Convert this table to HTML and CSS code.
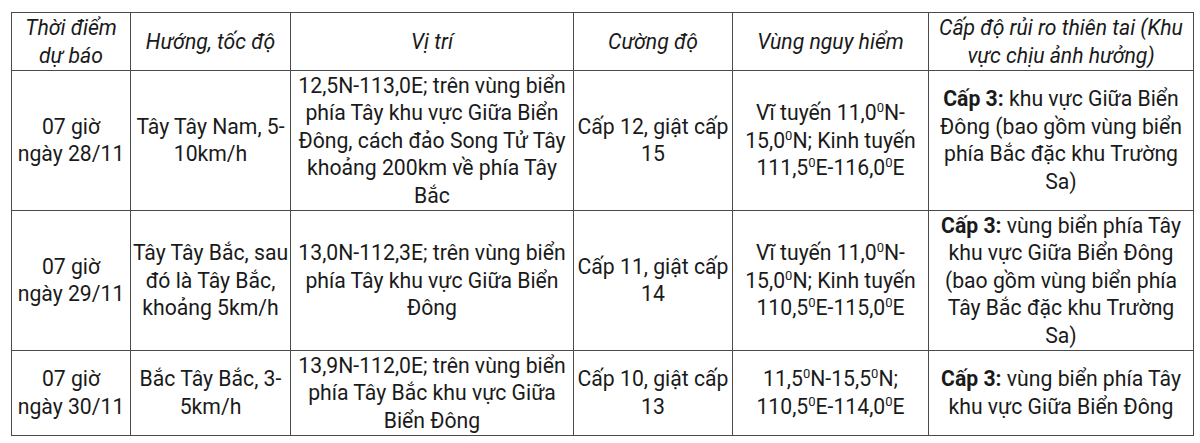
FILE: index.html
```html
<!DOCTYPE html>
<html lang="vi">
<head>
<meta charset="utf-8">
<link rel="stylesheet" href="styles.css">
</head>
<body>
<table class="forecast">
  <colgroup>
    <col class="c1"><col class="c2"><col class="c3"><col class="c4"><col class="c5"><col class="c6">
  </colgroup>
  <thead>
    <tr>
      <th>Thời điểm dự báo</th>
      <th>Hướng, tốc độ</th>
      <th>Vị trí</th>
      <th>Cường độ</th>
      <th>Vùng nguy hiểm</th>
      <th>Cấp độ rủi ro thiên tai (Khu vực chịu ảnh hưởng)</th>
    </tr>
  </thead>
  <tbody>
    <tr>
      <td>07 giờ<br>ngày 28/11</td>
      <td>Tây Tây Nam, 5-10km/h</td>
      <td>12,5N-113,0E; trên vùng biển phía Tây khu vực Giữa Biển Đông, cách đảo Song Tử Tây khoảng 200km về phía Tây Bắc</td>
      <td>Cấp 12, giật cấp 15</td>
      <td>Vĩ tuyến 11,0<sup>0</sup>N-15,0<sup>0</sup>N; Kinh tuyến 111,5<sup>0</sup>E-116,0<sup>0</sup>E</td>
      <td><b>Cấp 3:</b> khu vực Giữa Biển Đông (bao gồm vùng biển phía Bắc đặc khu Trường Sa)</td>
    </tr>
    <tr>
      <td>07 giờ<br>ngày 29/11</td>
      <td>Tây Tây Bắc, sau đó là Tây Bắc, khoảng 5km/h</td>
      <td>13,0N-112,3E; trên vùng biển phía Tây khu vực Giữa Biển Đông</td>
      <td>Cấp 11, giật cấp 14</td>
      <td>Vĩ tuyến 11,0<sup>0</sup>N-15,0<sup>0</sup>N; Kinh tuyến 110,5<sup>0</sup>E-115,0<sup>0</sup>E</td>
      <td><b>Cấp 3:</b> vùng biển phía Tây khu vực Giữa Biển Đông (bao gồm vùng biển phía Tây Bắc đặc khu Trường Sa)</td>
    </tr>
    <tr>
      <td>07 giờ<br>ngày 30/11</td>
      <td>Bắc Tây Bắc, 3-5km/h</td>
      <td>13,9N-112,0E; trên vùng biển phía Tây Bắc khu vực Giữa Biển Đông</td>
      <td>Cấp 10, giật cấp 13</td>
      <td>11,5<sup>0</sup>N-15,5<sup>0</sup>N; 110,5<sup>0</sup>E-114,0<sup>0</sup>E</td>
      <td><b>Cấp 3:</b> vùng biển phía Tây khu vực Giữa Biển Đông</td>
    </tr>
  </tbody>
</table>
</body>
</html>
```
FILE: styles.css
```css
html, body {
  margin: 0;
  padding: 0;
  background: #ffffff;
}
body {
  padding: 12px 0 0 11px;
  font-family: Roboto, "Liberation Sans", sans-serif;
  color: #1a1a1a;
}
.forecast {
  border-collapse: collapse;
  table-layout: fixed;
  width: 1182px;
  font-size: 21.2px;
  line-height: 27.5px;
}
.c1 { width: 119px; }
.c2 { width: 160px; }
.c3 { width: 283px; }
.c4 { width: 159px; }
.c5 { width: 196px; }
.c6 { width: 265px; }
.forecast th,
.forecast td {
  border: 1px solid #4a4a4a;
  text-align: center;
  vertical-align: middle;
  padding: 1px 2px 0.5px;
}
.forecast td:first-child {
  padding-left: 0;
  padding-right: 0;
}
.forecast td:nth-child(2) {
  padding-left: 0;
  padding-right: 0;
}
.forecast td:last-child {
  padding-left: 8px;
  padding-right: 8px;
}
.forecast th {
  font-style: italic;
  font-weight: normal;
}
.forecast b {
  font-weight: bold;
}
.forecast sup {
  font-size: 13px;
  line-height: 0;
  vertical-align: 8px;
}
```
